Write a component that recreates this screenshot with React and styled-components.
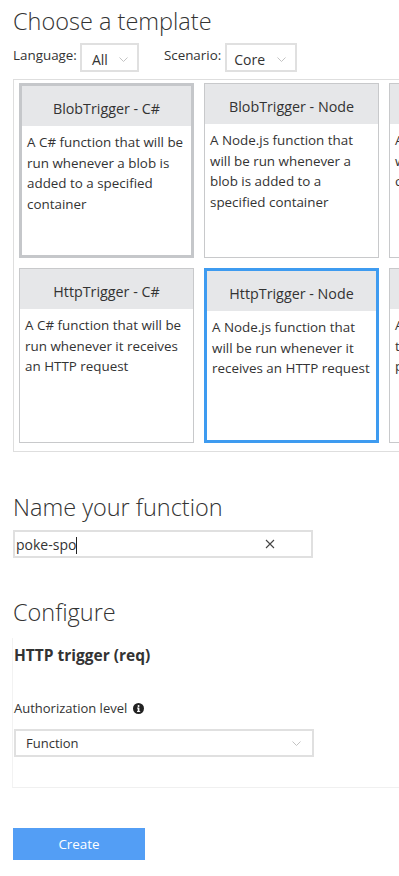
import React from "react";
import styled, { createGlobalStyle, css } from "styled-components";

const GlobalStyle = createGlobalStyle`
  html, body { margin: 0; padding: 0; background: #fff; }
  body {
    font-family: "Open Sans", "Noto Sans", "Liberation Sans", sans-serif;
    color: #333;
  }
`;

const Page = styled.div`
  box-sizing: border-box;
  width: 399px;
  height: 876px;
  overflow: hidden;
  padding-left: 13px;
`;

const Heading = styled.h2`
  margin: ${(p) => p.$mt || 0}px 0 0;
  font-size: 23.5px;
  font-weight: 300;
  line-height: 30px;
  color: #333;
  white-space: nowrap;
`;

const FilterRow = styled.div`
  display: flex;
  align-items: flex-start;
  margin-top: 7px;
  height: 29px;
`;

const FilterLabel = styled.span`
  font-size: 13.4px;
  line-height: 17px;
  margin-top: 4px;
  margin-right: ${(p) => p.$mr}px;
  white-space: nowrap;
`;

const Chevron = () => (
  <svg width="9" height="5" viewBox="0 0 9 5" fill="none">
    <path d="M0.5 0.5 L4.5 4.5 L8.5 0.5" stroke="#c3c3c3" strokeWidth="1" />
  </svg>
);

const MiniSelect = styled.div`
  box-sizing: border-box;
  height: 29px;
  width: ${(p) => p.$w}px;
  margin-right: ${(p) => p.$mr || 0}px;
  border: 2px solid #e0e0e0;
  display: flex;
  align-items: center;
  justify-content: space-between;
  padding: 3px 9px 0 ${(p) => p.$pl || 7}px;
  font-size: 14px;
`;

const GridFrame = styled.div`
  margin-top: 7px;
  width: 430px;
  border: 1px solid #dedede;
  border-right: none;
  padding: 3px 0 8px 5px;
  display: grid;
  grid-template-columns: repeat(3, 175px);
  grid-auto-rows: 175px;
  gap: 10px;
`;

const Card = styled.div`
  box-sizing: border-box;
  border: 1px solid #c8c9cb;
  background: #fff;
  display: flex;
  flex-direction: column;
  ${(p) =>
    p.$state === "hover" &&
    css`
      border: 3px solid #c5c7ca;
    `}
  ${(p) =>
    p.$state === "selected" &&
    css`
      border: 3px solid #3e9bf0;
    `}
`;

const CardHeader = styled.div`
  box-sizing: border-box;
  height: 40px;
  flex: none;
  padding-top: 4px;
  background: #e6e7e9;
  display: flex;
  align-items: center;
  justify-content: center;
  font-size: 14.3px;
  white-space: nowrap;
  color: #333;
`;

const CardBody = styled.div`
  padding: 6px 5px 0;
  font-size: 13.4px;
  line-height: 20.5px;
  color: #333;
  white-space: nowrap;
`;

const Line = styled.div``;

const TextBox = styled.div`
  box-sizing: border-box;
  margin-top: 8px;
  width: 300px;
  height: 28px;
  border: 2px solid #e0e0e0;
  display: flex;
  align-items: center;
  justify-content: space-between;
  padding: 0 36px 0 1px;
  font-size: 14px;
`;

const Caret = styled.span`
  display: inline-block;
  width: 1px;
  height: 17px;
  background: #222;
  vertical-align: -4px;
`;

const Panel = styled.div`
  margin: 11px 0 0 -1px;
  padding: 7px 0 30px 1px;
  border-left: 1px solid #f2f2f2;
  border-bottom: 1px solid #f0f0f0;
  width: 400px;
`;

const SubTitle = styled.div`
  font-size: 15.5px;
  font-weight: 700;
  line-height: 20px;
  color: #333;
  white-space: nowrap;
`;

const FieldLabel = styled.div`
  margin-top: 34px;
  font-size: 13px;
  line-height: 18px;
  display: flex;
  align-items: center;
  gap: 6px;
`;

const InfoIcon = () => (
  <svg width="11" height="11" viewBox="0 0 11 11">
    <circle cx="5.5" cy="5.5" r="5.5" fill="#222" />
    <rect x="4.7" y="4.6" width="1.7" height="4.2" fill="#fff" />
    <rect x="4" y="8" width="3.2" height="0.9" fill="#fff" />
    <rect x="4" y="4.6" width="1.5" height="0.9" fill="#fff" />
    <circle cx="5.55" cy="3" r="1" fill="#fff" />
  </svg>
);

const WideSelect = styled.div`
  box-sizing: border-box;
  margin-top: 12px;
  width: 300px;
  height: 28px;
  border: 2px solid #e0e0e0;
  display: flex;
  align-items: center;
  justify-content: space-between;
  padding: 0 11px 0 10px;
  font-size: 13px;
`;

const CreateButton = styled.button`
  display: block;
  margin-top: 40px;
  width: 132px;
  height: 32px;
  border: none;
  background: #539ef5;
  color: #fff;
  font-family: inherit;
  font-size: 13.4px;
  padding: 0;
  cursor: pointer;
`;

const cards = [
  {
    title: "BlobTrigger - C#",
    state: "hover",
    lines: ["A C# function that will be", "run whenever a blob is", "added to a specified", "container"],
  },
  {
    title: "BlobTrigger - Node",
    lines: ["A Node.js function that", "will be run whenever a", "blob is added to a", "specified container"],
  },
  {
    title: "QueueTrigger - C#",
    lines: ["A C# function that", "will be run whenever a", "change is detected"],
  },
  {
    title: "HttpTrigger - C#",
    lines: ["A C# function that will be", "run whenever it receives", "an HTTP request"],
  },
  {
    title: "HttpTrigger - Node",
    state: "selected",
    lines: ["A Node.js function that", "will be run whenever it", "receives an HTTP request"],
  },
  {
    title: "TimerTrigger - C#",
    lines: ["A function that will be", "triggered by a", "periodic schedule"],
  },
];

export default function App() {
  return (
    <>
      <GlobalStyle />
      <Page>
        <Heading $mt={6}>Choose a template</Heading>
        <FilterRow>
          <FilterLabel $mr={3}>Language:</FilterLabel>
          <MiniSelect $w={59} $mr={25} $pl={10}>
            <span>All</span>
            <Chevron />
          </MiniSelect>
          <FilterLabel $mr={4}>Scenario:</FilterLabel>
          <MiniSelect $w={72}>
            <span>Core</span>
            <Chevron />
          </MiniSelect>
        </FilterRow>
        <GridFrame>
          {cards.map((c) => (
            <Card key={c.title} $state={c.state}>
              <CardHeader>{c.title}</CardHeader>
              <CardBody>
                {c.lines.map((l) => (
                  <Line key={l}>{l}</Line>
                ))}
              </CardBody>
            </Card>
          ))}
        </GridFrame>

        <Heading $mt={40}>Name your function</Heading>
        <TextBox>
          <span>
            poke-spo
            <Caret />
          </span>
          <svg width="10" height="10" viewBox="0 0 10 10">
            <path d="M1 1 L9 9 M9 1 L1 9" stroke="#444" strokeWidth="1.1" />
          </svg>
        </TextBox>

        <Heading $mt={39}>Configure</Heading>
        <Panel>
          <SubTitle>HTTP trigger (req)</SubTitle>
          <FieldLabel>
            Authorization level
            <InfoIcon />
          </FieldLabel>
          <WideSelect>
            <span>Function</span>
            <Chevron />
          </WideSelect>
        </Panel>
        <CreateButton>Create</CreateButton>
      </Page>
    </>
  );
}
